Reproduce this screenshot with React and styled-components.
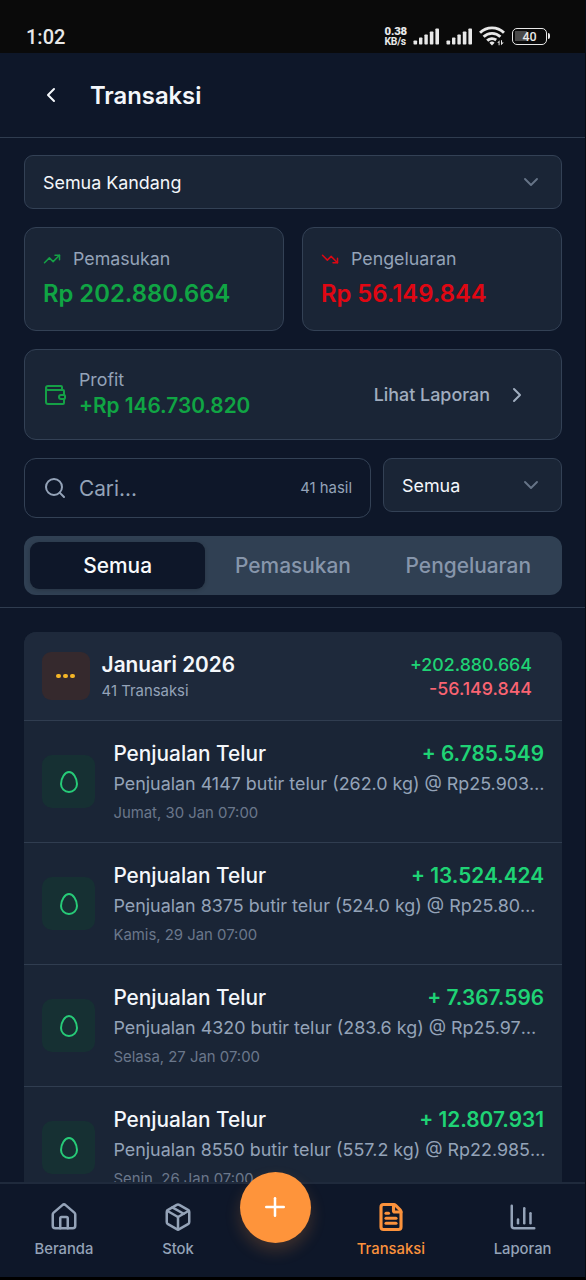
import React from "react";
import styled, { createGlobalStyle } from "styled-components";
// Icons
import {
  ChevronLeft,
  ChevronRight,
  ChevronDown,
  TrendingUp,
  TrendingDown,
  Wallet,
  Search,
  Egg,
  Plus,
  House,
  Package,
  FileText,
  ChartColumn,
} from "lucide-react";

const rows = [
  {
    title: "Penjualan Telur",
    amount: "+ 6.785.549",
    desc: "Penjualan 4147 butir telur (262.0 kg) @ Rp25.903",
    date: "Jumat, 30 Jan 07:00",
  },
  {
    title: "Penjualan Telur",
    amount: "+ 13.524.424",
    desc: "Penjualan 8375 butir telur (524.0 kg) @ Rp25.80",
    date: "Kamis, 29 Jan 07:00",
  },
  {
    title: "Penjualan Telur",
    amount: "+ 7.367.596",
    desc: "Penjualan 4320 butir telur (283.6 kg) @ Rp25.97",
    date: "Selasa, 27 Jan 07:00",
  },
  {
    title: "Penjualan Telur",
    amount: "+ 12.807.931",
    desc: "Penjualan 8550 butir telur (557.2 kg) @ Rp22.985",
    date: "Senin, 26 Jan 07:00",
  },
];

const Signal = () => (
  <svg width="27" height="17" viewBox="0 0 27 17" fill="#e8e8e8">
    <rect x="0.5" y="12.5" width="3.6" height="4" rx="0.8" />
    <rect x="6" y="9.5" width="3.4" height="7" rx="0.8" />
    <rect x="11.4" y="6.5" width="3.4" height="10" rx="0.8" />
    <rect x="16.8" y="3.5" width="3.6" height="13" rx="0.8" />
    <rect x="22.4" y="0.5" width="3.6" height="16" rx="0.8" />
  </svg>
);

const Wifi = () => (
  <svg width="26" height="20" viewBox="0 0 26 20" fill="none">
    <g stroke="#e8e8e8" strokeWidth="2.9">
      <path d="M1 6.8a17 17 0 0 1 24 0" />
      <path d="M4.6 10.8a12 12 0 0 1 16.8 0" />
      <path d="M8.2 14.6a7 7 0 0 1 9 -0.6" />
    </g>
    <path d="M10.4 16.8a3.8 3.8 0 0 1 5.2 0L13 19.4z" fill="#e8e8e8" />
    <path
      d="M18.2 16.8l2.4-2.6v5h-1v-2.4zM22 19.2v-5h1v2.4h1.8z"
      fill="#e8e8e8"
    />
  </svg>
);

const App = () => {
  return (
    <Screen>
      <GlobalStyle />
      <StatusBar>
        <Clock>1:02</Clock>
        <StatusIcons>
          <Speed>
            <b>0.38</b>
            <span>KB/s</span>
          </Speed>
          <Signal />
          <Signal />
          <Wifi />
          <Battery>
            <span>40</span>
          </Battery>
        </StatusIcons>
      </StatusBar>
      <Header>
        <ChevronLeft size={24} strokeWidth={2} />
        <h1>Transaksi</h1>
      </Header>
      <Filters>
        <Select>
          Semua Kandang
          <ChevronDown size={24} strokeWidth={1.9} />
        </Select>
        <Split>
          <StatCard>
            <StatLabel $color="#15a046">
              <TrendingUp size={18} strokeWidth={2} />
              Pemasukan
            </StatLabel>
            <StatValue $color="#10a544">Rp 202.880.664</StatValue>
          </StatCard>
          <StatCard>
            <StatLabel $color="#dc0814">
              <TrendingDown size={18} strokeWidth={2} />
              Pengeluaran
            </StatLabel>
            <StatValue $color="#e00713">Rp 56.149.844</StatValue>
          </StatCard>
        </Split>
        <Profit>
          <Wallet size={24} strokeWidth={2} color="#15a046" />
          <ProfitText>
            <p>Profit</p>
            <strong>+Rp 146.730.820</strong>
          </ProfitText>
          <ReportLink>
            Lihat Laporan
            <ChevronRight size={24} strokeWidth={2} />
          </ReportLink>
        </Profit>
        <SearchRow>
          <SearchBox>
            <Search size={24} strokeWidth={2} />
            <p>Cari...</p>
            <small>41 hasil</small>
          </SearchBox>
          <Select>
            Semua
            <ChevronDown size={24} strokeWidth={1.9} />
          </Select>
        </SearchRow>
        <Tabs>
          <Tab $active>Semua</Tab>
          <Tab>Pemasukan</Tab>
          <Tab>Pengeluaran</Tab>
        </Tabs>
      </Filters>
      <List>
        <Group>
          <GroupHeader>
            <GroupIcon>
              <i />
              <i />
              <i />
            </GroupIcon>
            <GroupTitle>
              <h2>Januari 2026</h2>
              <p>41 Transaksi</p>
            </GroupTitle>
            <Totals>
              <Total $color="#1fd375">+202.880.664</Total>
              <Total $color="#fa6472">-56.149.844</Total>
            </Totals>
          </GroupHeader>
          {rows.map((row) => (
            <Row key={row.date}>
              <RowIcon>
                <Egg size={24} strokeWidth={2} />
              </RowIcon>
              <RowBody>
                <RowTop>
                  <h3>{row.title}</h3>
                  <strong>{row.amount}</strong>
                </RowTop>
                <p>
                  {row.desc}
                  <span>…</span>
                </p>
                <small>{row.date}</small>
              </RowBody>
            </Row>
          ))}
        </Group>
      </List>
      <Nav>
        <NavItem>
          <House size={30} strokeWidth={2} />
          Beranda
        </NavItem>
        <NavItem>
          <Package size={30} strokeWidth={2} />
          Stok
        </NavItem>
        <AddButton>
          <Plus size={30} strokeWidth={2} />
        </AddButton>
        <NavItem $active>
          <FileText size={30} strokeWidth={2.5} />
          Transaksi
        </NavItem>
        <NavItem>
          <ChartColumn size={30} strokeWidth={2} />
          Laporan
        </NavItem>
      </Nav>
    </Screen>
  );
};

const GlobalStyle = createGlobalStyle`
  * {
    margin: 0;
    padding: 0;
    box-sizing: border-box;
  }
  body {
    background: #000;
    font-family: Inter, "Liberation Sans", sans-serif;
  }
  svg {
    display: block;
    flex-shrink: 0;
  }
`;

const Screen = styled.div`
  display: flex;
  flex-direction: column;
  width: 586px;
  height: 1280px;
  overflow: hidden;
  background: #0e1729;
  color: #f4f7fb;
  border-right: 1px solid #070b14;
  border-bottom: 3px solid #000;
`;

const StatusBar = styled.div`
  display: flex;
  justify-content: space-between;
  height: 53px;
  padding: 20px 38px 0 26px;
  flex-shrink: 0;
  background: #0a0a0a;
  color: #e8e8e8;
`;

const Clock = styled.div`
  font: 500 20px/34px Roboto, sans-serif;
`;

const StatusIcons = styled.div`
  display: flex;
  align-items: center;
  height: 32px;
  gap: 6px;
`;

const Speed = styled.div`
  font-family: Roboto, sans-serif;
  font-weight: 700;
  line-height: 10.5px;
  white-space: nowrap;
  margin-top: 1px;
  b,
  span {
    display: block;
  }
  b {
    font-size: 11.4px;
    letter-spacing: -0.2px;
  }
  span {
    font-size: 10.4px;
    letter-spacing: -0.3px;
  }
`;

const Battery = styled.div`
  position: relative;
  width: 35px;
  height: 17px;
  margin-left: 1px;
  border: 1.5px solid #e8e8e8;
  border-radius: 5px;
  background: linear-gradient(#4a4a4a, #4a4a4a) 2px 2px / 12px 10px no-repeat;
  span {
    display: block;
    text-align: center;
    font: 500 12.5px/15px Roboto, sans-serif;
  }
  &::after {
    content: "";
    position: absolute;
    right: -4px;
    top: 4px;
    width: 2px;
    height: 6px;
    border-radius: 0 2px 2px 0;
    background: #e8e8e8;
  }
`;

const Header = styled.header`
  display: flex;
  align-items: center;
  gap: 27px;
  height: 85px;
  padding-left: 39px;
  flex-shrink: 0;
  border-bottom: 1px solid #2f3c4f;
  h1 {
    font-size: 23.8px;
    font-weight: 600;
  }
`;

const Filters = styled.section`
  display: flex;
  flex-direction: column;
  gap: 18px;
  padding: 17px 23px 12px 24px;
  flex-shrink: 0;
  border-bottom: 1px solid #2f3c4f;
`;

const Select = styled.div`
  display: flex;
  align-items: center;
  justify-content: space-between;
  height: 54px;
  padding: 0 18px;
  border: 1px solid #334155;
  border-radius: 9px;
  background: #1a2536;
  font-size: 17.9px;
  svg {
    color: #667487;
  }
`;

const Split = styled.div`
  display: grid;
  grid-template-columns: 1fr 1fr;
  gap: 18px;
`;

const StatCard = styled.div`
  height: 104px;
  padding: 18px;
  border: 1px solid #334155;
  border-radius: 12px;
  background: #1a2536;
`;

const StatLabel = styled.div`
  display: flex;
  align-items: center;
  gap: 12px;
  color: #94a3b8;
  font-size: 17.8px;
  line-height: 25px;
  svg {
    color: ${(props) => props.$color};
  }
`;

const StatValue = styled.div`
  margin-top: 5px;
  color: ${(props) => props.$color};
  font-size: 23.8px;
  font-weight: 600;
  line-height: 36px;
`;

const Profit = styled.div`
  display: flex;
  align-items: center;
  gap: 12px;
  height: 91px;
  padding: 0 18px;
  border: 1px solid #334155;
  border-radius: 12px;
  background: #1a2536;
`;

const ProfitText = styled.div`
  flex: 1;
  padding-bottom: 2px;
  p {
    color: #94a3b8;
    font-size: 17.8px;
    line-height: 24px;
  }
  strong {
    display: block;
    color: #10a544;
    font-size: 20.8px;
    font-weight: 600;
    line-height: 28px;
  }
`;

const ReportLink = styled.div`
  display: flex;
  align-items: center;
  gap: 15px;
  padding-right: 14px;
  color: #a0adbf;
  font-size: 17.9px;
  font-weight: 500;
`;

const SearchRow = styled.div`
  display: grid;
  grid-template-columns: 347px 1fr;
  align-items: start;
  gap: 12px;
`;

const SearchBox = styled.div`
  display: flex;
  align-items: center;
  gap: 12px;
  height: 60px;
  padding: 0 18px;
  border: 1px solid #334155;
  border-radius: 12px;
  color: #94a3b8;
  p {
    flex: 1;
    font-size: 20.8px;
  }
  small {
    font-size: 14.9px;
  }
`;

const Tabs = styled.div`
  display: grid;
  grid-template-columns: repeat(3, 1fr);
  height: 59px;
  padding: 6px;
  border-radius: 12px;
  background: #304053;
`;

const Tab = styled.div`
  display: flex;
  align-items: center;
  justify-content: center;
  border-radius: 9px;
  font-size: 20.9px;
  font-weight: 500;
  color: ${(props) => (props.$active ? "#f8fafc" : "#8796ab")};
  background: ${(props) => (props.$active ? "#0e1729" : "transparent")};
  box-shadow: ${(props) => (props.$active ? "0 1px 4px #0003" : "none")};
`;

const List = styled.main`
  flex: 1;
  min-height: 0;
  overflow: hidden;
  padding: 24px 23px 0 24px;
`;

const Group = styled.div`
  border-radius: 12px 12px 0 0;
  overflow: hidden;
  background: #1a2536;
`;

const GroupHeader = styled.div`
  display: flex;
  align-items: center;
  gap: 12px;
  height: 89px;
  padding: 0 30px 0 17.6px;
  border-bottom: 1px solid #303d50;
  background: #1e293b;
`;

const GroupIcon = styled.div`
  display: flex;
  align-items: center;
  justify-content: center;
  gap: 2.6px;
  width: 48px;
  height: 48px;
  border-radius: 9px;
  background: #35292d;
  i {
    width: 4.5px;
    height: 4.5px;
    border-radius: 50%;
    background: #f5b526;
  }
`;

const GroupTitle = styled.div`
  flex: 1;
  h2 {
    font-size: 20.8px;
    font-weight: 600;
    line-height: 30px;
  }
  p {
    color: #94a3b8;
    font-size: 14.9px;
    line-height: 23px;
  }
`;

const Totals = styled.div`
  padding-top: 1px;
  text-align: right;
`;

const Total = styled.div`
  color: ${(props) => props.$color};
  font-size: 17.8px;
  font-weight: 500;
  line-height: 24px;
`;

const Row = styled.div`
  display: flex;
  align-items: center;
  gap: 18.4px;
  height: 122px;
  padding: 0 18px;
  border-bottom: 1px solid #303d50;
`;

const RowIcon = styled.div`
  display: flex;
  align-items: center;
  justify-content: center;
  width: 53px;
  height: 53px;
  flex-shrink: 0;
  border-radius: 10px;
  background: #163033;
  color: #27cb78;
`;

const RowBody = styled.div`
  flex: 1;
  min-width: 0;
  white-space: nowrap;
  p {
    color: #94a3b8;
    font-size: 17.9px;
    line-height: 30px;
  }
  p span {
    display: inline-block;
  }
  small {
    display: block;
    margin-top: 3px;
    color: #6a778b;
    font-size: 14.9px;
    line-height: 22px;
  }
`;

const RowTop = styled.div`
  display: flex;
  justify-content: space-between;
  font-size: 20.8px;
  line-height: 30px;
  h3 {
    font-size: inherit;
    font-weight: 500;
  }
  strong {
    color: #1fd375;
    font-weight: 600;
  }
`;

const Nav = styled.nav`
  position: relative;
  display: flex;
  justify-content: space-between;
  height: 95px;
  padding: 18px 33.5px 0 34.5px;
  flex-shrink: 0;
  border-top: 2px solid #1f2a3c;
  background: #0e1729;
`;

const NavItem = styled.div`
  display: flex;
  flex-direction: column;
  align-items: center;
  gap: 6px;
  color: ${(props) => (props.$active ? "#fb923c" : "#94a3b8")};
  font-size: 14.8px;
  font-weight: 500;
  line-height: 22px;
`;

const AddButton = styled.div`
  display: flex;
  align-items: center;
  justify-content: center;
  width: 71.5px;
  height: 71.5px;
  margin: -30.5px -23px 0;
  border-radius: 50%;
  background: #fe943b;
  color: #fff;
  box-shadow: 0 8px 16px rgba(251, 146, 60, 0.2);
`;

export default App;
